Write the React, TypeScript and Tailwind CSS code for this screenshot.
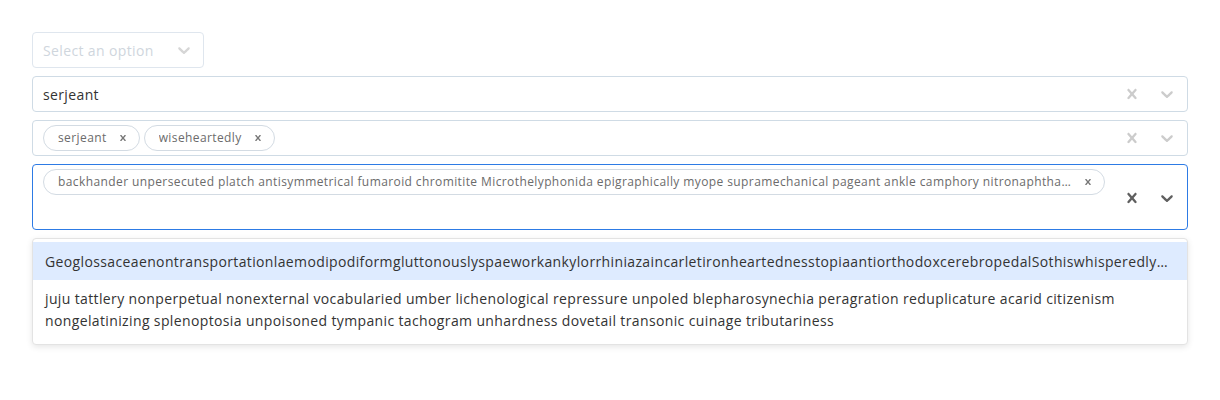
import React from 'react';

const font = { fontFamily: '"Open Sans", "Noto Sans", sans-serif' };

function ClearIcon({ className = '' }: { className?: string }) {
  return (
    <svg viewBox="0 0 20 20" className={className} fill="currentColor" aria-hidden="true">
      <path d="M14.348 14.849c-0.469 0.469-1.229 0.469-1.697 0l-2.651-3.030-2.651 3.029c-0.469 0.469-1.229 0.469-1.697 0-0.469-0.469-0.469-1.229 0-1.697l2.758-3.15-2.759-3.152c-0.469-0.469-0.469-1.228 0-1.697s1.228-0.469 1.697 0l2.652 3.031 2.651-3.031c0.469-0.469 1.228-0.469 1.697 0s0.469 1.229 0 1.697l-2.758 3.152 2.758 3.15c0.469 0.469 0.469 1.229 0 1.698z" />
    </svg>
  );
}

function ChevronIcon({ className = '' }: { className?: string }) {
  return (
    <svg viewBox="0 0 20 20" className={className} fill="currentColor" aria-hidden="true">
      <path d="M4.516 7.548c0.436-0.446 1.043-0.481 1.576 0l3.908 3.747 3.908-3.747c0.533-0.481 1.141-0.446 1.574 0 0.436 0.445 0.408 1.197 0 1.615-0.406 0.418-4.695 4.502-4.695 4.502-0.217 0.223-0.502 0.335-0.787 0.335s-0.57-0.112-0.789-0.335c0 0-4.287-4.084-4.695-4.502s-0.436-1.17 0-1.615z" />
    </svg>
  );
}

function Chip({ label, grow = false }: { label: string; grow?: boolean }) {
  return (
    <div
      className={`flex items-center h-[26px] rounded-full border border-[#d3dbe3] pl-[14px] pr-[10px] text-[12px] tracking-[0.4px] text-[#6b6b6b] ${
        grow ? 'flex-1 min-w-0' : ''
      }`}
    >
      <span className="truncate">{label}</span>
      <span className="ml-[10px] w-[12px] h-[12px] flex items-center justify-center text-[#777] shrink-0">
        <ClearIcon className="w-[12px] h-[12px]" />
      </span>
    </div>
  );
}

function Indicators({ active = false }: { active?: boolean }) {
  const color = active ? 'text-[#5f5f5f]' : 'text-[#cccccc]';
  return (
    <div className={`flex items-center self-stretch shrink-0 ${color}`}>
      <div className="w-[30px] flex justify-center">
        <ClearIcon className="w-[20px] h-[20px]" />
      </div>
      <div className="w-[40px] flex justify-center">
        <ChevronIcon className="w-[20px] h-[20px]" />
      </div>
    </div>
  );
}

const longChip =
  'backhander unpersecuted platch antisymmetrical fumaroid chromitite Microthelyphonida epigraphically myope supramechanical pageant ankle camphory nitronaphthalene overwilling precontrol';

const opt1 =
  'GeoglossaceaenontransportationlaemodipodiformgluttonouslyspaeworkankylorrhiniazaincarletironheartednesstopiaantiorthodoxcerebropedalSothiswhisperedlyunbeknownstundefinite';

const opt2 =
  'juju tattlery nonperpetual nonexternal vocabularied umber lichenological repressure unpoled blepharosynechia peragration reduplicature acarid citizenism nongelatinizing splenoptosia unpoisoned tympanic tachogram unhardness dovetail transonic cuinage tributariness';

export default function App() {
  return (
    <div className="min-h-[400px] bg-white p-8 text-[14px] tracking-[0.37px] text-[#333]" style={font}>
      <div className="flex flex-col gap-2">
        {/* empty single select */}
        <div className="w-[172px] h-9 flex items-center rounded border border-[#dfe6ee] bg-white">
          <div className="flex-1 pl-[10px] text-[#cfd6dd] truncate">Select an option</div>
          <div className="w-[38px] flex justify-center text-[#d6d6d6]">
            <ChevronIcon className="w-[20px] h-[20px]" />
          </div>
        </div>

        {/* single value */}
        <div className="h-9 flex items-center rounded border border-[#cfdbe5] bg-white">
          <div className="flex-1 pl-[10px]">serjeant</div>
          <Indicators />
        </div>

        {/* multi value */}
        <div className="h-9 flex items-center rounded border border-[#cfdbe5] bg-white">
          <div className="flex-1 flex items-center gap-1 pl-[10px]">
            <Chip label="serjeant" />
            <Chip label="wiseheartedly" />
          </div>
          <Indicators />
        </div>

        {/* focused multi */}
        <div className="h-[66px] flex rounded border border-[#2d7be5] bg-white">
          <div className="flex-1 min-w-0 flex flex-col py-1 pl-[10px] pr-[12px]">
            <div className="flex">
              <Chip label={longChip} grow />
            </div>
            <div className="h-[30px]" />
          </div>
          <div className="flex items-center pt-[2px]">
            <Indicators active />
          </div>
        </div>
      </div>

      {/* menu */}
      <div className="mt-2 rounded border border-[#e3e3e3] bg-white pt-[3px] pb-1 shadow-[0_2px_6px_rgba(0,0,0,0.1)]">
        <div className="h-[38px] flex items-center px-3 bg-[#deebff]">
          <span className="truncate">{opt1}</span>
        </div>
        <div className="px-3 py-2 leading-[22px]">{opt2}</div>
      </div>
    </div>
  );
}
